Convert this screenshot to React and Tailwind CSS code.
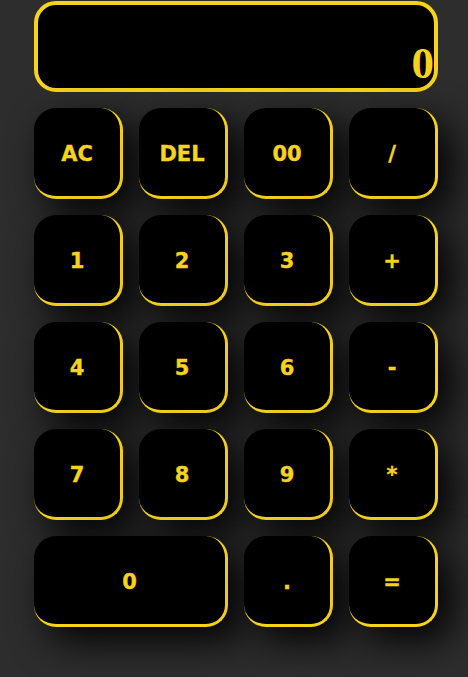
import React, { useState } from "react";

const keys = [
  { label: "AC" },
  { label: "DEL" },
  { label: "00" },
  { label: "/" },
  { label: "1" },
  { label: "2" },
  { label: "3" },
  { label: "+" },
  { label: "4" },
  { label: "5" },
  { label: "6" },
  { label: "-" },
  { label: "7" },
  { label: "8" },
  { label: "9" },
  { label: "*" },
  { label: "0", wide: true },
  { label: "." },
  { label: "=" },
];

const App = () => {
  const [value, setValue] = useState("0");

  const press = (k) => {
    if (k === "AC") return setValue("0");
    if (k === "DEL") return setValue((v) => (v.length > 1 ? v.slice(0, -1) : "0"));
    if (k === "=") {
      try {
        // eslint-disable-next-line no-new-func
        setValue(String(Function(`return (${value})`)()));
      } catch {
        setValue("Error");
      }
      return;
    }
    setValue((v) => (v === "0" || v === "Error" ? k : v + k));
  };

  return (
    <div className="min-h-screen bg-[#2d2d2d] pt-px">
      <div className="ml-[34px] w-[404px]">
        <div className="flex h-[91px] items-end justify-end rounded-[22px] border-4 border-[#f7d31c] bg-black pb-[2px] pr-0">
          <span className="font-['Liberation_Serif',serif] text-[45px] font-bold leading-none text-[#f7d31c]">
            {value}
          </span>
        </div>

        <div className="mt-4 grid grid-cols-4 gap-4">
          {keys.map((k) => (
            <button
              key={k.label}
              onClick={() => press(k.label)}
              className={`${k.wide ? "col-span-2" : ""} flex h-[91px] items-center justify-center rounded-[22px] border-r-[3px] border-b-[3px] border-[#f7d31c] bg-black pt-[6px] font-['DejaVu_Sans',sans-serif] text-[21px] font-bold text-[#f7d31c] [-webkit-text-stroke:0.35px_#f7d31c] shadow-[14px_14px_38px_rgba(0,0,0,0.95)]`}
            >
              {k.label}
            </button>
          ))}
        </div>
      </div>
    </div>
  );
};

export default App;
